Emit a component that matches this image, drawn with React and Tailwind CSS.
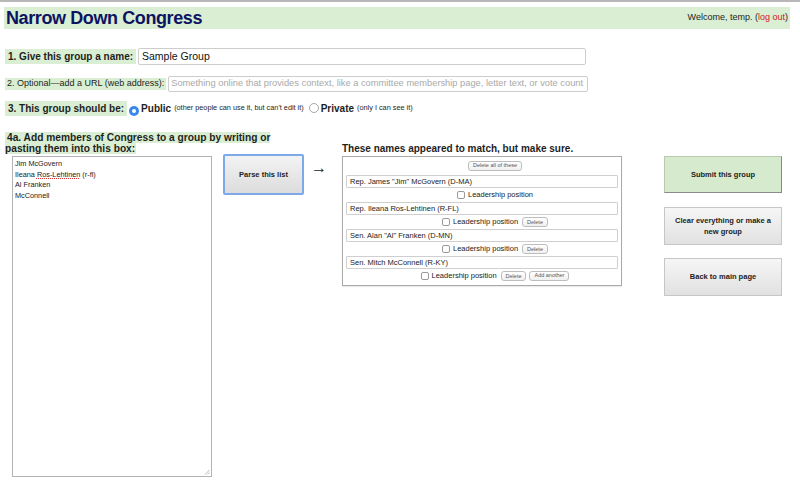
import React from 'react';

const green = 'bg-[#d9eed3]';

function SmallButton({ children }) {
  return (
    <span className="inline-flex items-center h-[10px] px-[4px] rounded-[3px] border border-[#bdbdbd] bg-gradient-to-b from-white to-[#f0f0f0] text-[5.5px] text-[#555] leading-none">
      {children}
    </span>
  );
}

function Checkbox() {
  return <span className="inline-block w-[8px] h-[8px] rounded-[2px] border border-[#9a9a9a] bg-white" />;
}

function Radio({ checked }) {
  if (checked) {
    return (
      <span className="inline-flex items-center justify-center w-[10px] h-[10px] rounded-full bg-[#3a87f0]">
        <span className="w-[4px] h-[4px] rounded-full bg-white" />
      </span>
    );
  }
  return <span className="inline-block w-[10px] h-[10px] rounded-full border border-[#a8a8a8] bg-white" />;
}

function Match({ name, del, add }) {
  return (
    <div>
      <div className="h-[13px] border border-[#cfcfcf] rounded-[1px] px-[3px] flex items-center text-[7.5px] text-[#222]">
        {name}
      </div>
      <div className="h-[11px] mt-[1px] pl-[26px] flex items-center justify-center gap-[3px] text-[7.5px] text-[#222]">
        <Checkbox />
        <span>Leadership position</span>
        {del && <span className="ml-[1px]"><SmallButton>Delete</SmallButton></span>}
        {add && <SmallButton>Add another</SmallButton>}
      </div>
    </div>
  );
}

const matches = [
  { name: 'Rep. James "Jim" McGovern (D-MA)' },
  { name: 'Rep. Ileana Ros-Lehtinen (R-FL)', del: true },
  { name: 'Sen. Alan "Al" Franken (D-MN)', del: true },
  { name: 'Sen. Mitch McConnell (R-KY)', del: true, add: true },
];

const pasted = ['Jim McGovern', 'Ileana Ros-Lehtinen (r-fl)', 'Al Franken', 'McConnell'];

export default function App() {
  return (
    <div className="w-[800px] h-[487px] bg-white border-t-2 border-[#b8b8b8] font-['Liberation_Sans',Arial,sans-serif] text-[#1e1e1e] overflow-hidden">
      <div className={`ml-[4px] mt-[5px] w-[786px] h-[22px] ${green} flex items-center justify-between px-[2px]`}>
        <h1 className="text-[18px] font-bold text-[#0c1462] tracking-[-0.4px] leading-none">Narrow Down Congress</h1>
        <div className="text-[9px] text-[#222]">
          Welcome, temp. (<span className="text-[#d8141c]">log out</span>)
        </div>
      </div>

      <div className="mt-[19px] pl-[5px] flex items-center gap-[2px]">
        <span className={`${green} h-[15px] px-[3px] flex items-center text-[10px] font-bold`}>1. Give this group a name:</span>
        <div className="w-[448px] h-[17px] border border-[#cdcdcd] rounded-[2px] px-[3px] flex items-center text-[10.5px] text-[#111]">
          Sample Group
        </div>
      </div>

      <div className="mt-[11px] pl-[5px] flex items-center gap-[2px]">
        <span className={`${green} h-[12px] px-[2px] flex items-center text-[9px]`}>2. Optional—add a URL (web address):</span>
        <div className="w-[420px] h-[16px] border border-[#cdcdcd] rounded-[2px] px-[2px] flex items-center text-[9.3px] text-[#a9a9a9] whitespace-nowrap overflow-hidden">
          Something online that provides context, like a committee membership page, letter text, or vote count
        </div>
      </div>

      <div className="mt-[8px] pl-[5px] h-[16px] flex items-center">
        <span className={`${green} h-[15px] px-[3px] flex items-center text-[10px] font-bold`}>3. This group should be:</span>
        <span className="ml-[2px]"><Radio checked /></span>
        <span className="ml-[2px] text-[10px] font-bold">Public</span>
        <span className="ml-[3px] text-[7.3px]">(other people can use it, but can't edit it)</span>
        <span className="ml-[5px]"><Radio /></span>
        <span className="ml-[2px] text-[10px] font-bold">Private</span>
        <span className="ml-[3px] text-[7.3px]">(only I can see it)</span>
      </div>

      <div className="mt-[16px] pl-[5px] grid grid-cols-[337px_280px_160px] gap-y-[2px]">
        <div className="w-[290px] text-[10.2px] font-bold leading-[11px]">
          <span className={`${green} pl-[2px] pr-[1px]`}>4a. Add members of Congress to a group by writing or pasting them into this box:</span>
        </div>
        <div className="self-end text-[10px] font-bold leading-[11px]">These names appeared to match, but make sure.</div>
        <div />

        <div className="flex items-start">
          <div className="relative ml-[7px] w-[200px] h-[321px] border border-[#b3b3b3] px-[2px] pt-[2px] text-[7.3px] leading-[10.5px] text-[#222] flex flex-col">
            {pasted.map((line, i) => (
              <div key={i} className="h-[10.5px]">
                {i === 1 ? (
                  <>
                    Ileana <span className="underline decoration-dotted decoration-[#e03030]">Ros-Lehtinen</span> (r-fl)
                  </>
                ) : (
                  line
                )}
              </div>
            ))}
            <svg className="absolute right-[1px] bottom-[1px]" width="6" height="6" viewBox="0 0 6 6">
              <path d="M5.5 1 L1 5.5 M5.5 3.5 L3.5 5.5" stroke="#999" strokeWidth="0.7" />
            </svg>
          </div>
          <div className="ml-[11px] -mt-[2px] w-[81px] h-[41px] rounded-[2px] border-2 border-[#7da8ea] bg-gradient-to-b from-[#f3f3f3] to-[#dcdcdc] flex items-center justify-center text-[7.5px] font-bold text-[#222]">
            Parse this list
          </div>
          <div className="ml-[7px] mt-[4px] text-[16px] leading-none text-[#222]">→</div>
        </div>

        <div className="h-[130px] border border-[#aaaaaa] shadow-[0_1px_1px_rgba(0,0,0,0.08)] px-[3px] pt-[4px]">
          <div className="pl-[26px] flex justify-center">
            <SmallButton>Delete all of these</SmallButton>
          </div>
          <div className="mt-[4px] flex flex-col gap-[2px]">
            {matches.map((m, i) => (
              <Match key={i} {...m} />
            ))}
          </div>
        </div>

        <div className="pl-[42px] flex flex-col">
          <div className="w-[118px] h-[37px] bg-[#d6ebcd] border border-[#b9c9b2] border-r-[#8a8a8a] border-b-[#8a8a8a] flex items-center justify-center text-[7.5px] font-bold text-[#222]">
            Submit this group
          </div>
          <div className="mt-[14px] w-[118px] h-[38px] bg-gradient-to-b from-[#f6f6f6] to-[#e1e1e1] border border-[#c6c6c6] flex items-center justify-center px-[6px] text-center text-[7.5px] leading-[11px] font-bold text-[#222]">
            Clear everything or make a new group
          </div>
          <div className="mt-[13px] w-[118px] h-[38px] bg-gradient-to-b from-[#f6f6f6] to-[#e1e1e1] border border-[#c6c6c6] flex items-center justify-center text-[7.5px] font-bold text-[#222]">
            Back to main page
          </div>
        </div>
      </div>
    </div>
  );
}
